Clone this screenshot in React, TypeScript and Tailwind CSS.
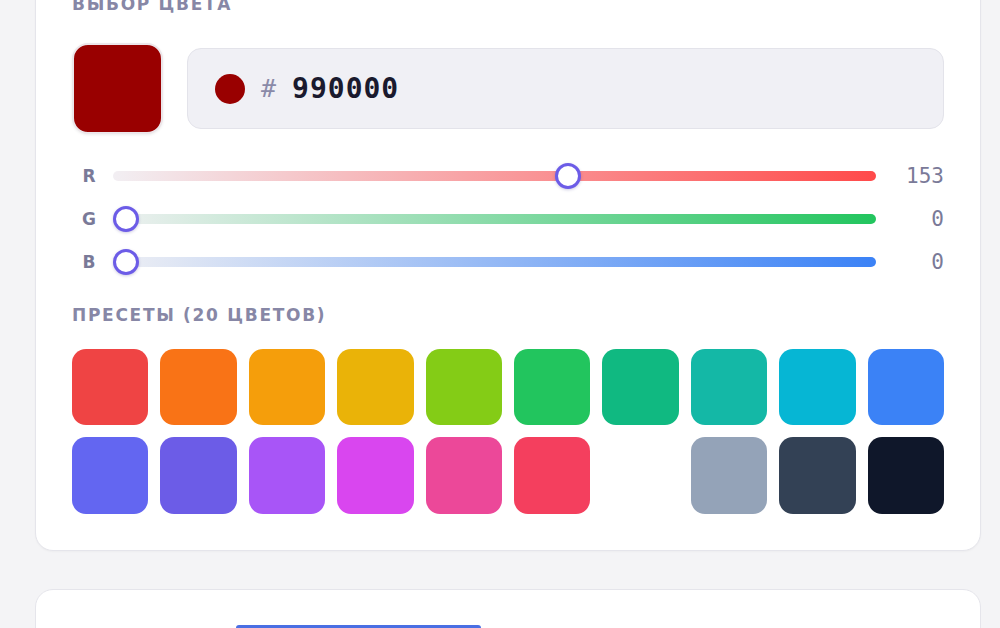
import React from "react";

const presets = [
  "#ef4444", "#f97316", "#f59e0b", "#eab308", "#84cc16",
  "#22c55e", "#10b981", "#14b8a6", "#06b6d4", "#3b82f6",
  "#6366f1", "#6c5ce7", "#a855f7", "#d946ef", "#ec4899",
  "#f43f5e", "#ffffff", "#94a3b8", "#334155", "#0f172a",
];

type Channel = {
  label: string;
  value: number;
  track: string;
};

const channels: Channel[] = [
  { label: "R", value: 153, track: "bg-[linear-gradient(to_right,#f2eff3,#ff4a4a)]" },
  { label: "G", value: 0, track: "bg-[linear-gradient(to_right,#eef0f1,#22c55e)]" },
  { label: "B", value: 0, track: "bg-[linear-gradient(to_right,#eeeff4,#3b82f6)]" },
];

function ChannelSlider({ label, value, track }: Channel) {
  const ratio = value / 255;
  return (
    <div className="flex h-[26px] items-center">
      <span className="w-[34px] text-center text-[17px] font-bold leading-none text-[#7a7a98]">
        {label}
      </span>
      <div className="relative ml-[7px] flex h-[26px] flex-1 items-center">
        <div className={`h-[10px] w-full rounded-full ${track}`} />
        <div
          className="absolute top-0 h-[26px] w-[26px] rounded-full border-[3px] border-[#6c5ce7] bg-white shadow-[0_1px_3px_rgba(60,50,140,0.25)]"
          style={{ left: `calc(${ratio} * (100% - 26px))` }}
        />
      </div>
      <span className="ml-[20px] w-[48px] text-right font-['DejaVu_Sans_Mono',monospace] text-[21px] leading-none text-[#7a7a98]">
        {value}
      </span>
    </div>
  );
}

export default function App() {
  return (
    <div className="flex h-screen flex-col overflow-hidden bg-[#f4f4f6] pl-[35px] pr-[19px] font-['DejaVu_Sans',sans-serif]">
      <section className="-mt-[45px] rounded-[18px] border border-[#e5e5eb] bg-white p-9 shadow-[0_1px_2px_rgba(0,0,0,0.03)]">
        <h2 className="text-[17px] font-bold uppercase leading-6 tracking-[0.1em] text-[#8787a6]">
          Выбор цвета
        </h2>

        <div className="mt-[27px] flex items-center gap-6">
          <div className="h-[91px] w-[91px] shrink-0 rounded-[16px] border-2 border-[#ece6ea] bg-[#990000] shadow-[0_1px_3px_rgba(0,0,0,0.08)]" />
          <div className="flex h-[81px] flex-1 items-center rounded-[14px] border border-[#e3e3ea] bg-[#f0f0f5] pl-[27px]">
            <span className="h-[30px] w-[30px] rounded-full bg-[#990000]" />
            <span className="ml-[16px] font-['DejaVu_Sans_Mono',monospace] text-[25px] leading-none text-[#8a8aa8]">
              #
            </span>
            <span className="ml-[16px] font-['DejaVu_Sans_Mono',monospace] text-[28px] font-bold leading-none tracking-[1px] text-[#1a1a2e]">
              990000
            </span>
          </div>
        </div>

        <div className="mt-[29px] flex flex-col gap-[17px]">
          {channels.map((c) => (
            <ChannelSlider key={c.label} {...c} />
          ))}
        </div>

        <h3 className="mt-[28px] text-[17px] font-bold uppercase leading-6 tracking-[0.1em] text-[#8787a6]">
          Пресеты (20 цветов)
        </h3>

        <div className="mt-[22px] grid grid-cols-10 gap-3">
          {presets.map((color) => (
            <div
              key={color}
              className="aspect-square rounded-[14px]"
              style={{ backgroundColor: color }}
            />
          ))}
        </div>
      </section>

      <section className="mt-[38px] shrink-0 rounded-[18px] border border-[#e5e5eb] bg-white px-9 pb-9 pt-[35px]">
        <div className="ml-[164px] h-10 w-[245px] rounded-t-[3px] bg-[#4a6fe3]" />
      </section>
    </div>
  );
}
